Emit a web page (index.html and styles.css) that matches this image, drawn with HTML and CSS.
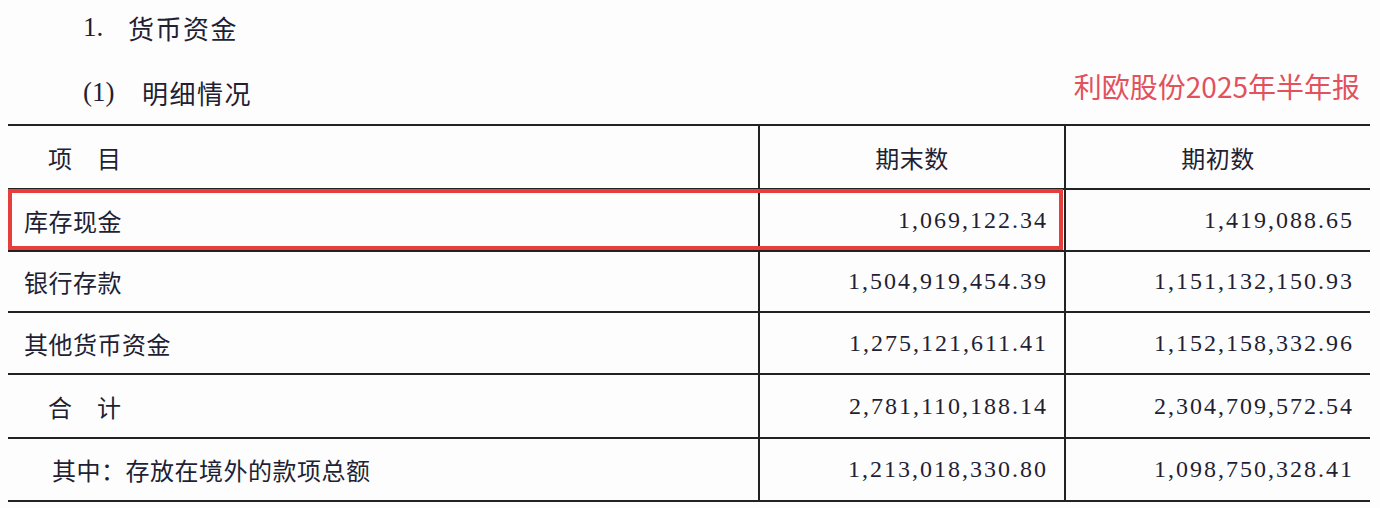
FILE: index.html
```html
<!DOCTYPE html>
<html lang="zh">
<head>
<meta charset="utf-8">
<title>货币资金</title>
<link rel="stylesheet" href="styles.css">
</head>
<body>
<div class="page">
  <div class="heading h-main"><span class="marker">1.</span><span class="zh">货币资金</span></div>
  <div class="heading-row">
    <div class="heading h-sub"><span class="marker m2">(1)</span><span class="zh">明细情况</span></div>
    <div class="watermark">利欧股份2025年半年报</div>
  </div>
  <div class="table-wrap">
    <div class="grid">
      <div class="cell label head-label r0">项　目</div>
      <div class="cell head r0">期末数</div>
      <div class="cell head r0">期初数</div>

      <div class="cell label r1">库存现金</div>
      <div class="cell num r1">1,069,122.34</div>
      <div class="cell num r1">1,419,088.65</div>

      <div class="cell label r2">银行存款</div>
      <div class="cell num r2">1,504,919,454.39</div>
      <div class="cell num r2">1,151,132,150.93</div>

      <div class="cell label r3">其他货币资金</div>
      <div class="cell num r3">1,275,121,611.41</div>
      <div class="cell num r3">1,152,158,332.96</div>

      <div class="cell label indent r4">合　计</div>
      <div class="cell num r4">2,781,110,188.14</div>
      <div class="cell num r4">2,304,709,572.54</div>

      <div class="cell label indent2 r5">其中：存放在境外的款项总额</div>
      <div class="cell num r5">1,213,018,330.80</div>
      <div class="cell num r5">1,098,750,328.41</div>
    </div>
    <div class="highlight"></div>
  </div>
</div>
</body>
</html>
```

FILE: styles.css
```css
html, body {
  margin: 0;
  padding: 0;
  background: #fdfdfd;
}

body {
  width: 1380px;
  height: 508px;
  overflow: hidden;
  color: #221f35;
  font-family: "Noto Sans CJK SC", "Liberation Serif", serif;
}

.page {
  display: flex;
  flex-direction: column;
}

.heading {
  display: flex;
  align-items: center;
  font-size: 26px;
  height: 54px;
  padding-left: 83px;
}

.heading .marker {
  font-family: "Liberation Serif", serif;
  font-size: 27px;
  width: 45px;
}

.heading .marker.m2 {
  width: 59px;
}

.heading .zh {
  letter-spacing: 1.5px;
}

.heading-row {
  display: flex;
  align-items: center;
  justify-content: space-between;
  margin-top: 7px;
  height: 63px;
}

.heading-row .heading {
  height: 60px;
}

.watermark {
  color: #e2515c;
  font-family: "Noto Sans CJK SC", "Noto Sans", sans-serif;
  font-size: 28px;
  padding-right: 20px;
  margin-bottom: 14px;
}

.table-wrap {
  position: relative;
  margin-left: 8px;
  width: 1362px;
}

.grid {
  display: grid;
  grid-template-columns: 750px 306px 306px;
  border-top: 2px solid #222;
}

.cell {
  display: flex;
  align-items: center;
  box-sizing: border-box;
  border-bottom: 2px solid #222;
  font-size: 24px;
  letter-spacing: 0.5px;
}

.cell:not(.label) {
  border-left: 2px solid #222;
}

.label {
  padding-left: 16px;
}

.head-label,
.indent {
  padding-left: 40px;
}

.indent2 {
  padding-left: 44px;
}

.head {
  justify-content: center;
}

.num {
  justify-content: flex-end;
  padding-right: 16px;
  font-family: "Liberation Serif", serif;
  letter-spacing: 2px;
}

.r0 { height: 64px; }
.r1 { height: 62px; }
.r2 { height: 61px; }
.r3 { height: 62px; }
.r4 { height: 64px; }
.r5 { height: 63px; }

.highlight {
  position: absolute;
  left: 0;
  top: 65px;
  width: 1055px;
  height: 61px;
  box-sizing: border-box;
  border: 4px solid #e63e3c;
}
```
